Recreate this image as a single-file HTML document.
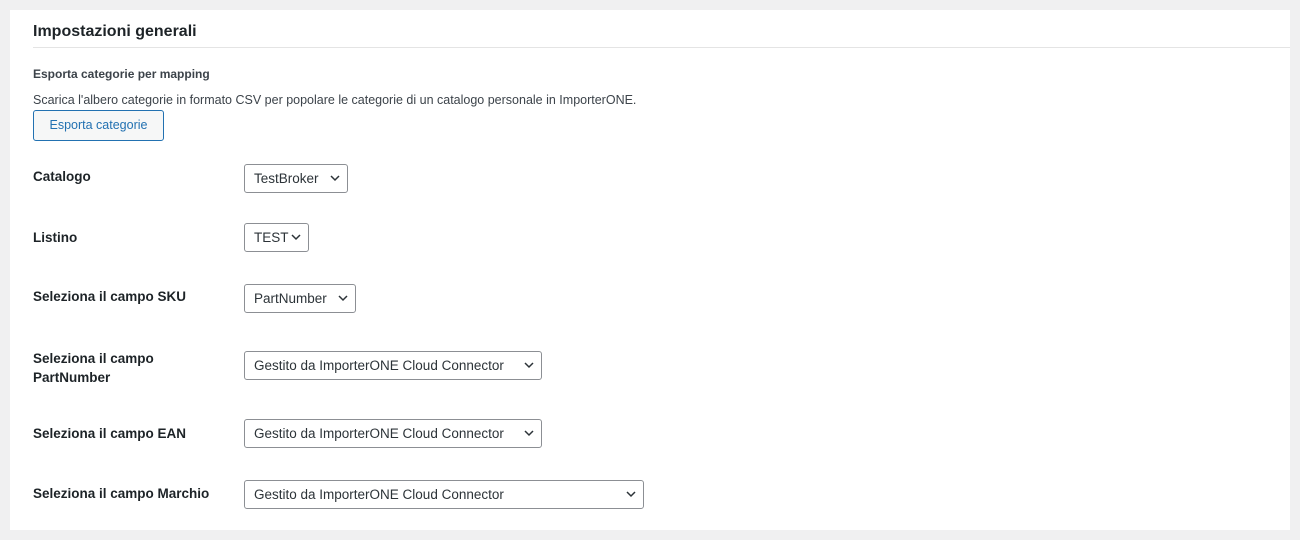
<!DOCTYPE html>
<html><head><meta charset="utf-8"><style>
body{margin:0;background:#f0f0f1;width:1300px;height:540px;overflow:hidden;font-family:"Liberation Sans",sans-serif;color:#1d2327;}
.panel{position:absolute;left:10px;top:10px;width:1280px;height:520px;background:#fff;}
.a{position:absolute;white-space:nowrap;}
.h{left:33px;top:23px;font-size:16px;font-weight:bold;}
.line{position:absolute;left:33px;top:47px;width:1257px;height:1px;background:#e4e4e4;}
.lbl{font-size:13.5px;font-weight:bold;left:33px;}
.sel{position:absolute;left:244px;height:27px;border:1px solid #8c8f94;border-radius:3px;font-size:13.5px;line-height:27px;padding-left:9px;box-sizing:content-box;color:#2c3338;}
.sel svg{position:absolute;right:7px;top:10px;}
.btn{position:absolute;left:33px;top:110px;width:129px;height:29px;border:1px solid #2271b1;border-radius:3px;background:#f6f7f7;color:#2271b1;font-size:12.5px;line-height:29px;text-align:center;}
</style></head><body>
<div class="panel"></div>
<div class="a h">Impostazioni generali</div>
<div class="line"></div>
<div class="a" style="left:33px;top:67px;font-size:12px;font-weight:bold;color:#3c434a">Esporta categorie per mapping</div>
<div class="a" style="left:33px;top:93px;font-size:12.5px;color:#3c434a">Scarica l'albero categorie in formato CSV per popolare le categorie di un catalogo personale in ImporterONE.</div>
<div class="btn">Esporta categorie</div>

<div class="a lbl" style="top:169px">Catalogo</div>
<div class="sel" style="top:164px;width:93px">TestBroker<svg width="10" height="7" viewBox="0 0 10 7"><path d="M1 1l4 4 4-4" fill="none" stroke="#2c3338" stroke-width="1.5"/></svg></div>

<div class="a lbl" style="top:230px">Listino</div>
<div class="sel" style="top:223px;width:54px">TEST<svg width="10" height="7" viewBox="0 0 10 7"><path d="M1 1l4 4 4-4" fill="none" stroke="#2c3338" stroke-width="1.5"/></svg></div>

<div class="a lbl" style="top:289px">Seleziona il campo SKU</div>
<div class="sel" style="top:284px;width:101px">PartNumber<svg width="10" height="7" viewBox="0 0 10 7"><path d="M1 1l4 4 4-4" fill="none" stroke="#2c3338" stroke-width="1.5"/></svg></div>

<div class="a lbl" style="top:349px;line-height:19px">Seleziona il campo<br>PartNumber</div>
<div class="sel" style="top:351px;width:287px">Gestito da ImporterONE Cloud Connector<svg width="10" height="7" viewBox="0 0 10 7"><path d="M1 1l4 4 4-4" fill="none" stroke="#2c3338" stroke-width="1.5"/></svg></div>

<div class="a lbl" style="top:426px">Seleziona il campo EAN</div>
<div class="sel" style="top:419px;width:287px">Gestito da ImporterONE Cloud Connector<svg width="10" height="7" viewBox="0 0 10 7"><path d="M1 1l4 4 4-4" fill="none" stroke="#2c3338" stroke-width="1.5"/></svg></div>

<div class="a lbl" style="top:486px">Seleziona il campo Marchio</div>
<div class="sel" style="top:480px;width:389px">Gestito da ImporterONE Cloud Connector<svg width="10" height="7" viewBox="0 0 10 7"><path d="M1 1l4 4 4-4" fill="none" stroke="#2c3338" stroke-width="1.5"/></svg></div>
</body></html>
